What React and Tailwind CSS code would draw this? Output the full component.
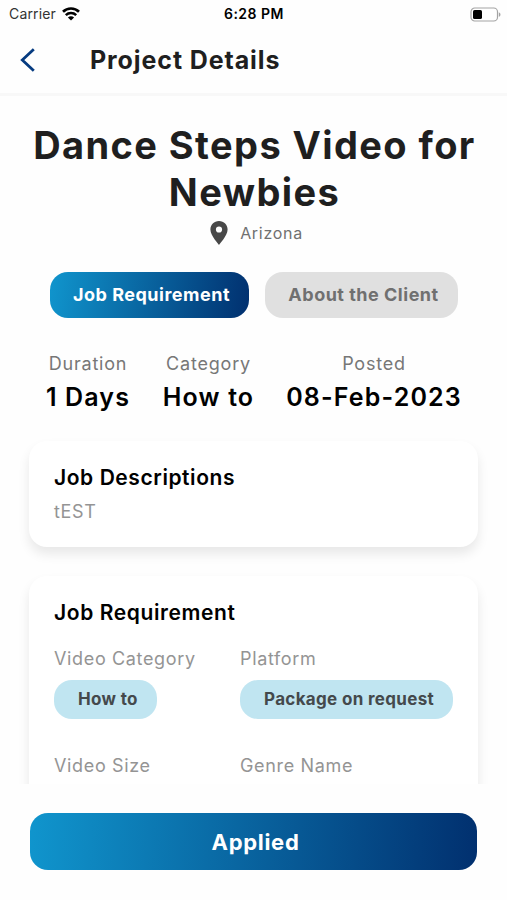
const stats = [
  { label: 'Duration', value: '1 Days', width: 'w-[84px]' },
  { label: 'Category', value: 'How to', width: 'w-[91px]' },
  { label: 'Posted', value: '08-Feb-2023', width: 'w-[174px]' },
];

function StatusBar() {
  return (
    <div className="grid h-7 shrink-0 grid-cols-3 items-center pl-[9px] pr-[5px] text-sm leading-none text-black">
      <div className="flex items-center gap-1.5">
        <span className="tracking-[0.15px] text-[#333]">Carrier</span>
        <svg className="h-[14px] w-[18px]" viewBox="0 0 18 14">
          <path d="M1 4.7C5.4.4 12.6.4 17 4.7" fill="none" stroke="#000" strokeWidth="2.7" />
          <path d="M3.8 8.1C6.7 5.3 11.3 5.3 14.2 8.1" fill="none" stroke="#000" strokeWidth="2.5" />
          <path d="M9 13.5 5.9 10.4C7.6 8.8 10.4 8.8 12.1 10.4Z" fill="#000" />
        </svg>
      </div>
      <span className="pr-[3px] text-center font-semibold tracking-[0.5px]">6:28 PM</span>
      <svg className="h-[15px] w-8 justify-self-end" viewBox="0 0 32 15">
        <rect x="1" y="1" width="26.5" height="13" rx="3.8" fill="#fff" stroke="#a3a3a3" strokeWidth="1.2" />
        <rect x="3" y="3" width="9" height="9" rx="1.6" fill="#000" />
        <path d="M28.8 5.2C31 6 31 9 28.8 9.8Z" fill="#a3a3a3" />
      </svg>
    </div>
  );
}

function Header() {
  return (
    <header className="flex h-[68px] shrink-0 items-center border-b-3 border-[#f8f8f8] pl-5">
      <svg className="mb-[2px] h-6 w-4" viewBox="0 0 16 24">
        <path d="M13.8 1.2 2.3 12 13.8 22.8" fill="none" stroke="#063b80" strokeWidth="2.8" />
      </svg>
      <h1 className="ml-[54px] text-[25px] font-bold tracking-[0.9px] text-[#1f1f1f]">Project Details</h1>
    </header>
  );
}

function Field({ label, value }) {
  return (
    <div>
      <p className="text-lg leading-6 tracking-[0.65px] text-[#949494]">{label}</p>
      {value && (
        <span className="mt-[9px] mb-px inline-flex h-[39px] items-center rounded-[18px] bg-[#c0e5f1] pl-6 pr-[19px] text-[17px] font-bold tracking-[0.33px] whitespace-nowrap text-[#44494c]">
          {value}
        </span>
      )}
    </div>
  );
}

export default function App() {
  return (
    <div className="flex h-[900px] w-[507px] flex-col overflow-hidden bg-[#fefefe] font-['Inter',sans-serif]">
      <StatusBar />
      <Header />

      <main className="h-[688px] shrink-0 overflow-hidden">
        <h2 className="mt-[26px] pl-0.5 text-center text-[38px] leading-[46.5px] font-bold tracking-[1.4px] text-[#1f1f1f]">
          Dance Steps Video for
          <br />
          Newbies
        </h2>

        <div className="mt-[5px] flex h-[26px] items-center justify-center gap-3 pl-1.5">
          <svg className="h-6 w-[18px]" viewBox="0 0 18 24">
            <path fillRule="evenodd" fill="#484848" d="M9 0C4 0 .4 3.8.4 8.6.4 14.6 9 24 9 24s8.6-9.4 8.6-15.4C17.6 3.8 14 0 9 0Zm0 5.400a3.100 3.100 0 1 1 0 6.200 3.100 3.100 0 0 1 0-6.200Z" />
          </svg>
          <span className="text-base tracking-[0.7px] text-[#707070]">Arizona</span>
        </div>

        <div className="mt-[26px] flex h-[46px] gap-4 pl-[50px] text-lg font-bold whitespace-nowrap">
          <button className="w-[199px] rounded-[18px] bg-linear-[98deg] from-[#1095cd] to-[#01306f] pl-1 tracking-[0.5px] text-white">Job Requirement</button>
          <button className="w-[193px] rounded-[18px] bg-[#e0e0e0] pl-1 tracking-[0.5px] text-[#707070]">About the Client</button>
        </div>

        <div className="mt-[34px] flex gap-[33px] pl-[46px] text-center whitespace-nowrap">
          {stats.map((stat) => (
            <div key={stat.label} className={`flex flex-col items-center ${stat.width}`}>
              <span className="text-lg leading-6 tracking-[0.8px] text-[#777]">{stat.label}</span>
              <span className="mt-[5px] text-[25px] leading-8 font-semibold tracking-[1.15px] text-black">{stat.value}</span>
            </div>
          ))}
        </div>

        <section className="mx-[29px] mt-7 h-[106px] rounded-[18px] bg-white px-[25px] pt-[23px] shadow-[0_7px_12px_rgba(0,0,0,0.09)]">
          <h3 className="text-[21px] leading-7 font-semibold tracking-[0.57px] text-black">Job Descriptions</h3>
          <p className="mt-2 text-lg leading-6 tracking-[0.65px] text-[#949494]">tEST</p>
        </section>

        <section className="mx-[29px] mt-[29px] h-[300px] rounded-[18px] bg-white px-[25px] pt-[23px] shadow-[0_7px_12px_rgba(0,0,0,0.09)]">
          <h3 className="text-[21px] leading-7 font-semibold tracking-[0.6px] text-black">Job Requirement</h3>
          <div className="mt-5 grid grid-cols-[186px_1fr] gap-y-[34px]">
            <Field label="Video Category" value="How to" />
            <Field label="Platform" value="Package on request" />
            <Field label="Video Size" />
            <Field label="Genre Name" />
          </div>
        </section>
      </main>

      <footer className="px-[30px] pt-[29px]">
        <button className="h-[57px] w-full rounded-[18px] bg-linear-[93deg] from-[#1095cd] to-[#01306f] pt-0.5 pl-1 text-[22px] font-bold tracking-[0.7px] text-white">Applied</button>
      </footer>
    </div>
  );
}
